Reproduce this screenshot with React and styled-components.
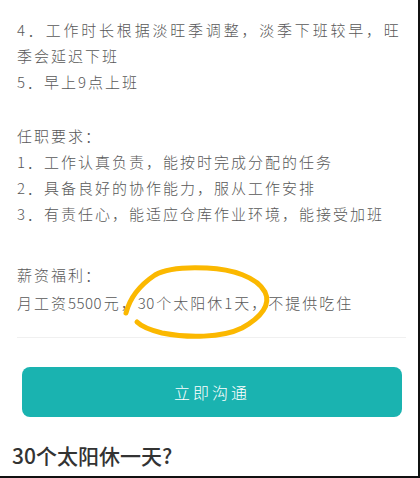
import React from 'react';
import styled, { createGlobalStyle } from 'styled-components';

const Global = createGlobalStyle`
    html, body {
        margin: 0;
        padding: 0;
        background: #ffffff;
    }
`

const Frame = styled.div`
    width: 420px;
    height: 478px;
    box-sizing: border-box;
    border-right: 2px solid #111;
    border-bottom: 2px solid #111;
    overflow: hidden;
    background: #fff;
    display: flex;
    flex-direction: column;
`

const Post = styled.div`
    padding: 17px 10px 0 17px;
    font-family: "Noto Sans CJK SC", "Noto Sans", sans-serif;
    font-weight: 300;
    font-size: 15px;
    letter-spacing: 2px;
    line-height: 26px;
    color: #585858;
`

const Section = styled.div`
    margin-top: ${p => p.gap || 0}px;
    line-height: ${p => p.lh || 26}px;
    position: relative;
`

const Line = styled.div`
    white-space: nowrap;
    letter-spacing: ${p => p.wide ? '2.8px' : 'inherit'};
`

// digits sit tighter than the CJK glyphs in the original
const Num = styled.span`
    letter-spacing: 0.5px;
    margin-right: 1.5px;
`

const Ring = styled.svg`
    position: absolute;
    left: 0;
    top: 0;
    overflow: visible;
    pointer-events: none;
`

const Divider = styled.div`
    height: 1px;
    background: #f0f0f0;
    margin: 20px 12px 0 17px;
`

const ButtonRow = styled.div`
    padding: 29px 16px 0 22px;
`

const Button = styled.button`
    width: 100%;
    height: 50px;
    border: none;
    border-radius: 8px;
    background: #1ab3b0;
    color: #fff;
    font-family: "Noto Sans CJK SC", serif;
    font-size: 16px;
    font-weight: 300;
    letter-spacing: 3px;
    cursor: pointer;
`

const Question = styled.h2`
    margin: 25px 0 0 12px;
    font-family: "Noto Sans CJK SC", "Noto Sans", sans-serif;
    font-size: 21px;
    font-weight: 500;
    color: #333;
    line-height: 26px;
`

export default function App() {
    return (
        <Frame>
            <Global />
            <Post>
                <Section>
                    <Line wide>4．工作时长根据淡旺季调整，淡季下班较早，旺</Line>
                    <Line>季会延迟下班</Line>
                    <Line>5．早上<Num>9</Num>点上班</Line>
                </Section>
                <Section gap={28}>
                    <Line>任职要求：</Line>
                    <Line>1．工作认真负责，能按时完成分配的任务</Line>
                    <Line>2．具备良好的协作能力，服从工作安排</Line>
                    <Line>3．有责任心，能适应仓库作业环境，能接受加班</Line>
                </Section>
                <Section gap={34} lh={28}>
                    <Line>薪资福利：</Line>
                    <Line>月工资<Num>5500</Num>元，<Num>30</Num>个太阳休<Num>1</Num>天，不提供吃住</Line>
                    {/* hand-drawn marker loop, coordinates relative to the section */}
                    <Ring width="300" height="90">
                        <path
                            d="M109 52 C 112 40, 120 26, 138 14 C 150 7, 170 6, 190 7 C 215 8, 240 16, 248 31 C 254 43, 245 56, 225 67 C 205 77, 170 77, 145 72 C 133 69, 124 65, 120 61"
                            fill="none"
                            stroke="#fbb800"
                            strokeWidth="5"
                            strokeLinecap="round"
                        />
                    </Ring>
                </Section>
            </Post>
            <Divider />
            <ButtonRow>
                <Button>立即沟通</Button>
            </ButtonRow>
            <Question>30个太阳休一天?</Question>
        </Frame>
    )
}
